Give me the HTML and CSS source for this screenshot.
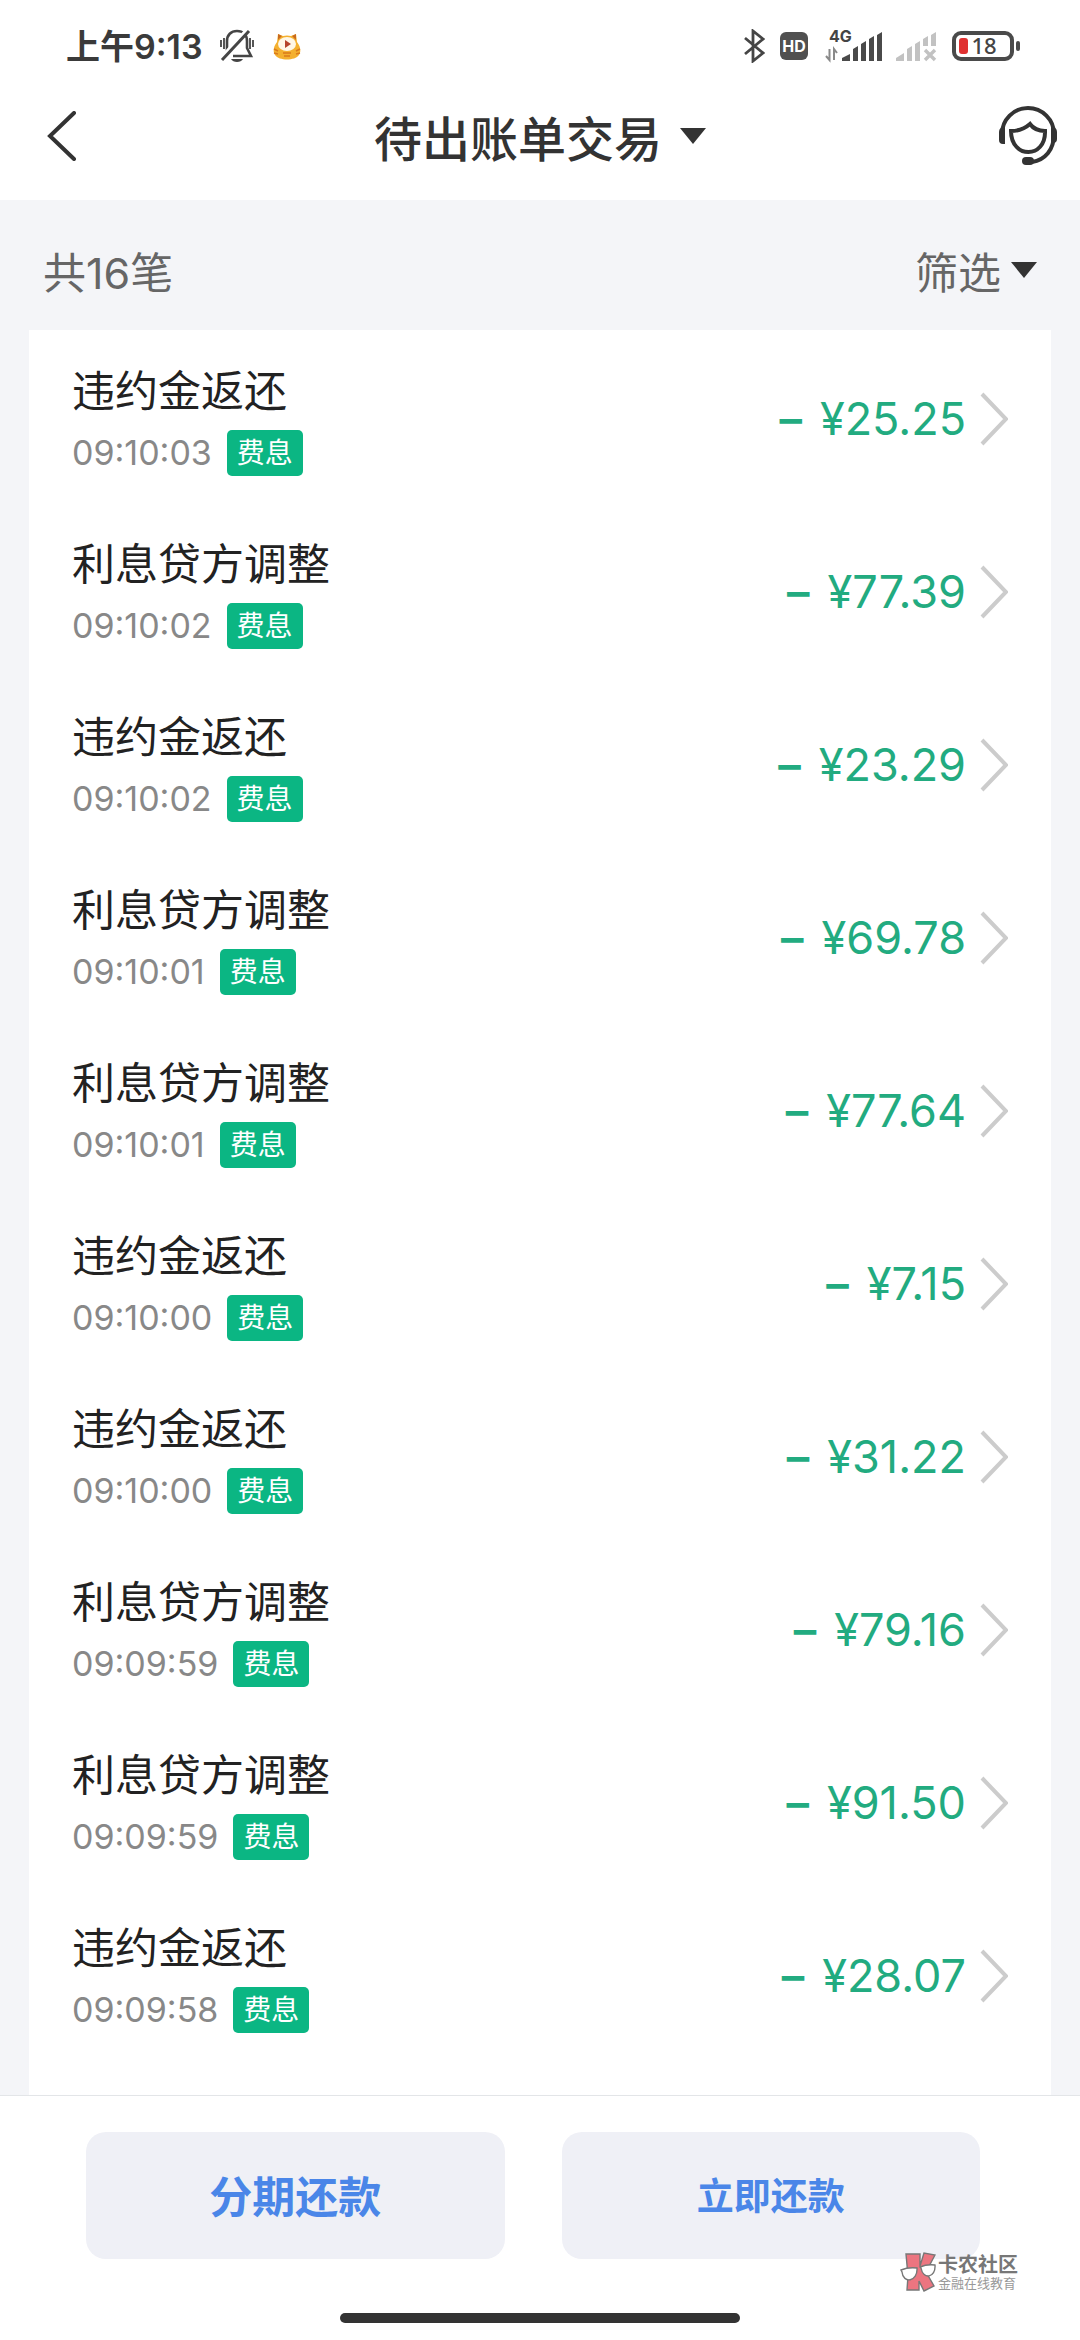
FILE: index.html
```
<!DOCTYPE html>
<html lang="zh-CN">
<head>
  <meta charset="UTF-8">
  <meta name="viewport" content="width=device-width, initial-scale=1.0">
  <title>待出账单交易</title>
  <link rel="stylesheet" href="styles.css">
</head>
<body>
  <div class="status-bar">
    <div class="status-left">
      <span class="clock">上午9:13</span>
      <svg class="icon-bell" width="36" height="36" viewBox="0 0 36 36">
        <path d="M8 24V13C8 7 12 3 18 3s10 4 10 10v7l4 8H14" fill="none" stroke="#454545" stroke-width="2.6"/>
        <path d="M2 12v7M5 10v11M31 10v11M34 12v7" stroke="#454545" stroke-width="1.8"/>
        <path d="M27 3L3 29" stroke="#fff" stroke-width="4"/>
        <path d="M30 3L3 32" stroke="#454545" stroke-width="3"/>
        <path d="M12 31h12c-2 4-10 4-12 0z" fill="#454545"/>
      </svg>
      <svg class="icon-cat" width="28" height="28" viewBox="0 0 28 28">
        <path d="M4 10L5 2l5 2q4-1 8 0l5-2 1 8c4 5 4 10 2 13-4 6-20 6-24 0-2-3-2-8 2-13z" fill="#f4b02f"/>
        <path d="M5 2l4 2-4 4zM23 2l-4 2 4 4z" fill="#c96a1f"/>
        <ellipse cx="14" cy="12" rx="9" ry="7" fill="#fff7e6"/>
        <path d="M12 8l6 4-6 4z" fill="#b5442c"/>
        <path d="M1 17l4 2M1 21l4 1M27 17l-4 2M27 21l-4 1M10 21h8M11 24h6" stroke="#d97a1c" stroke-width="1.6"/>
      </svg>
    </div>
    <div class="status-right">
      <svg width="22" height="34" viewBox="0 0 22 34">
        <path d="M2 9l18 15-10 8V2l10 8L2 25" fill="none" stroke="#454545" stroke-width="2.8"/>
      </svg>
      <svg class="icon-hd" width="28" height="28" viewBox="0 0 28 28">
        <rect width="28" height="28" rx="6" fill="#505050"/>
        <text x="14" y="20" text-anchor="middle" class="hd-text">HD</text>
      </svg>
      <svg class="icon-signal" width="58" height="46" viewBox="0 -6 58 46">
        <text x="4" y="13" class="net-text">4G</text>
        <path d="M4.500 20v11L1 27M9 31V20l3 4" fill="none" stroke="#8a8a8a" stroke-width="2"/>
        <path d="M17 32v-3l8-4v7zM28 32V20l5-3v15zM36 32V15l5-3v20zM44 32V10l5-3v25zM52 32V6l5-3v29z" fill="#4a4a4a"/>
      </svg>
      <svg class="icon-nosignal" width="42" height="34" viewBox="0 0 42 34">
        <path d="M1 32v-3l8-5v8zM12 32V20l5-3v15zM20 32V15l5-3v20zM28 17V10l5-3v10zM36 17V6l5-3v14z" fill="#c2c2c2"/>
        <path d="M30 21l10 10M40 21L30 31" stroke="#c2c2c2" stroke-width="3.400"/>
      </svg>
      <svg class="icon-battery" width="70" height="30" viewBox="0 0 70 30">
        <rect x="2" y="2" width="58" height="26" rx="7" fill="none" stroke="#4a4a4a" stroke-width="4"/>
        <rect x="64" y="10" width="4" height="10" rx="2" fill="#4a4a4a"/>
        <rect x="7" y="7" width="9" height="16" rx="3" fill="#e03131"/>
        <text x="32" y="23" text-anchor="middle" class="battery-text">18</text>
      </svg>
    </div>
  </div>

  <header class="header">
    <button class="back" type="button" aria-label="返回">
      <svg width="30" height="50" viewBox="0 0 30 50">
        <path d="M27 2L3 25l24 23" fill="none" stroke="#333" stroke-width="4" stroke-linecap="round"/>
      </svg>
    </button>
    <button class="title" type="button">
      待出账单交易
      <span class="caret"></span>
    </button>
    <a class="service" href="#" aria-label="客服">
      <svg width="60" height="60" viewBox="0 0 60 60">
        <path d="M4 28a26 26 0 0 1 52 0c0 16-9 26-22 28" fill="none" stroke="#333" stroke-width="4"/>
        <path d="M7 21v17H5q-4 0-4-4V26q0-5 6-5zM53 21v16h2q4 0 4-4V26q0-5-6-5z" fill="#333"/>
        <rect x="24" y="51" width="12" height="8" rx="4" fill="#333"/>
        <path d="M13 25q11 0 19-7 5 7 15 7c1 28-34 28-34 0z" fill="none" stroke="#333" stroke-width="4"/>
      </svg>
    </a>
  </header>

  <main class="content">
    <div class="summary">
      <span>共16笔</span>
      <button class="filter" type="button">筛选 <span class="caret"></span></button>
    </div>
    <ul class="list" id="list"></ul>
  </main>

  <footer class="footer">
    <div class="actions">
      <button class="btn btn-large" type="button">分期还款</button>
      <button class="btn" type="button">立即还款</button>
    </div>
    <div class="home-bar"></div>
    <div class="watermark">
      <svg width="36" height="40" viewBox="0 0 36 40">
        <path d="M6 2h14v12l4-13 11 2-9 17 8 14-10 5-5-10v9H7l1-14z" fill="#ec7580" stroke="#777" stroke-width="1.400"/>
        <path d="M1 18q7-3 16-2c1 14-14 16-15 4zM20 15q7-3 15-2c1 13-12 15-14 3z" fill="#fff" stroke="#777" stroke-width="1.400"/>
      </svg>
      <div>
        <div class="wm-name">卡农社区</div>
        <div class="wm-sub">金融在线教育</div>
      </div>
    </div>
  </footer>

  <script src="script.js"></script>
</body>
</html>
```
FILE: styles.css
```
* {
  box-sizing: border-box;
}
body {
  margin: 0;
  min-height: 100vh;
  display: flex;
  flex-direction: column;
  font-family: Inter, "Noto Sans CJK SC", sans-serif;
  color: #222;
  background: #fff;
}
button {
  padding: 0;
  border: none;
  background: none;
  font-family: inherit;
  color: inherit;
}
svg {
  display: block;
}

/* status bar */
.status-bar {
  display: flex;
  justify-content: space-between;
  align-items: center;
  height: 74px;
  padding: 18px 58px 0 66px;
}
.status-left, .status-right {
  display: flex;
  align-items: center;
}
.clock {
  padding-bottom: 4px;
  font-size: 34px;
  font-weight: 600;
  color: #3a3a3a;
}
.icon-bell {
  margin-left: 16px;
}
.icon-cat {
  margin-left: 18px;
}
.icon-hd {
  margin-left: 15px;
}
.icon-signal {
  margin-left: 17px;
}
.icon-nosignal {
  margin-left: 12px;
}
.icon-battery {
  margin-left: 15px;
}
.hd-text {
  font-size: 16px;
  font-weight: 700;
  fill: #fff;
}
.net-text {
  font-size: 16px;
  font-weight: 700;
  fill: #444;
}
.battery-text {
  font-family: "Noto Sans", sans-serif;
  font-size: 22px;
  font-weight: 500;
  fill: #444;
}

/* header */
.header {
  display: grid;
  grid-template-columns: 60px 1fr 60px;
  align-items: center;
  height: 126px;
  padding: 0 22px 2px 22px;
}
.back {
  justify-self: end;
  padding-right: 5px;
}
.title {
  display: flex;
  justify-content: center;
  align-items: center;
  gap: 18px;
  font-size: 48px;
  font-weight: 500;
  color: #333;
}
.caret {
  width: 0;
  border: 13px solid transparent;
  border-top: 16px solid #333;
  border-bottom: none;
}

/* list */
.content {
  flex: 1;
  display: flex;
  flex-direction: column;
  padding: 0 29px;
  background: #f4f5f8;
}
.summary {
  display: flex;
  justify-content: space-between;
  align-items: center;
  height: 130px;
  padding: 10px 14px 0;
  font-size: 43px;
  color: #666;
}
.filter {
  display: flex;
  align-items: center;
  gap: 10px;
  font-size: 43px;
}
.list {
  flex: 1;
  margin: 0;
  padding: 2px 0 0;
  list-style: none;
  background: #fff;
}
.row {
  display: flex;
  align-items: center;
  height: 173px;
  padding: 0 43px;
  color: inherit;
  text-decoration: none;
}
.info {
  flex: 1;
}
.name {
  font-size: 43px;
  line-height: 60px;
}
.meta {
  display: flex;
  align-items: center;
  gap: 15px;
  margin-top: 9px;
}
.time {
  font-size: 34px;
  line-height: 46px;
  color: #888;
}
.tag {
  padding: 0 10px;
  border-radius: 5px;
  background: #0bb683;
  color: #fff;
  font-size: 28px;
  line-height: 46px;
}
.amount {
  display: flex;
  gap: 18px;
  margin-right: 14px;
  font-size: 45px;
  color: #22ab80;
}
.sign {
  font-weight: 600;
}

/* footer */
.footer {
  position: relative;
  border-top: 1px solid #e3e5e8;
  padding: 36px 100px 17px 86px;
  background: #fff;
}
.actions {
  display: flex;
  gap: 57px;
}
.btn {
  flex: 1;
  height: 127px;
  padding-bottom: 4px;
  border-radius: 20px;
  background: #eff0f6;
  color: #4a86e8;
  font-size: 37px;
  font-weight: 700;
}
.btn-large {
  font-size: 43px;
}
.home-bar {
  width: 400px;
  height: 10px;
  margin: 54px 0 0 254px;
  border-radius: 5px;
  background: #333;
}
.watermark {
  position: absolute;
  right: 62px;
  bottom: 48px;
  display: flex;
  align-items: center;
  gap: 2px;
  color: #777;
}
.wm-name {
  font-size: 20px;
  font-weight: 700;
  line-height: 22px;
}
.wm-sub {
  font-size: 13px;
  line-height: 14px;
  color: #999;
}
```
FILE: script.js
```
const items = [
  ['违约金返还', '09:10:03', '25.25'],
  ['利息贷方调整', '09:10:02', '77.39'],
  ['违约金返还', '09:10:02', '23.29'],
  ['利息贷方调整', '09:10:01', '69.78'],
  ['利息贷方调整', '09:10:01', '77.64'],
  ['违约金返还', '09:10:00', '7.15'],
  ['违约金返还', '09:10:00', '31.22'],
  ['利息贷方调整', '09:09:59', '79.16'],
  ['利息贷方调整', '09:09:59', '91.50'],
  ['违约金返还', '09:09:58', '28.07']
];

document.getElementById('list').innerHTML = items.map(([name, time, amount]) => `
  <li>
    <a class="row" href="#">
      <div class="info">
        <div class="name">${name}</div>
        <div class="meta"><span class="time">${time}</span><span class="tag">费息</span></div>
      </div>
      <div class="amount"><span class="sign">–</span><span>¥${amount}</span></div>
      <svg width="28" height="54" viewBox="0 0 28 54">
        <path d="M2 2l24 25L2 52" fill="none" stroke="#ccc" stroke-width="4"/>
      </svg>
    </a>
  </li>`).join('');
```
